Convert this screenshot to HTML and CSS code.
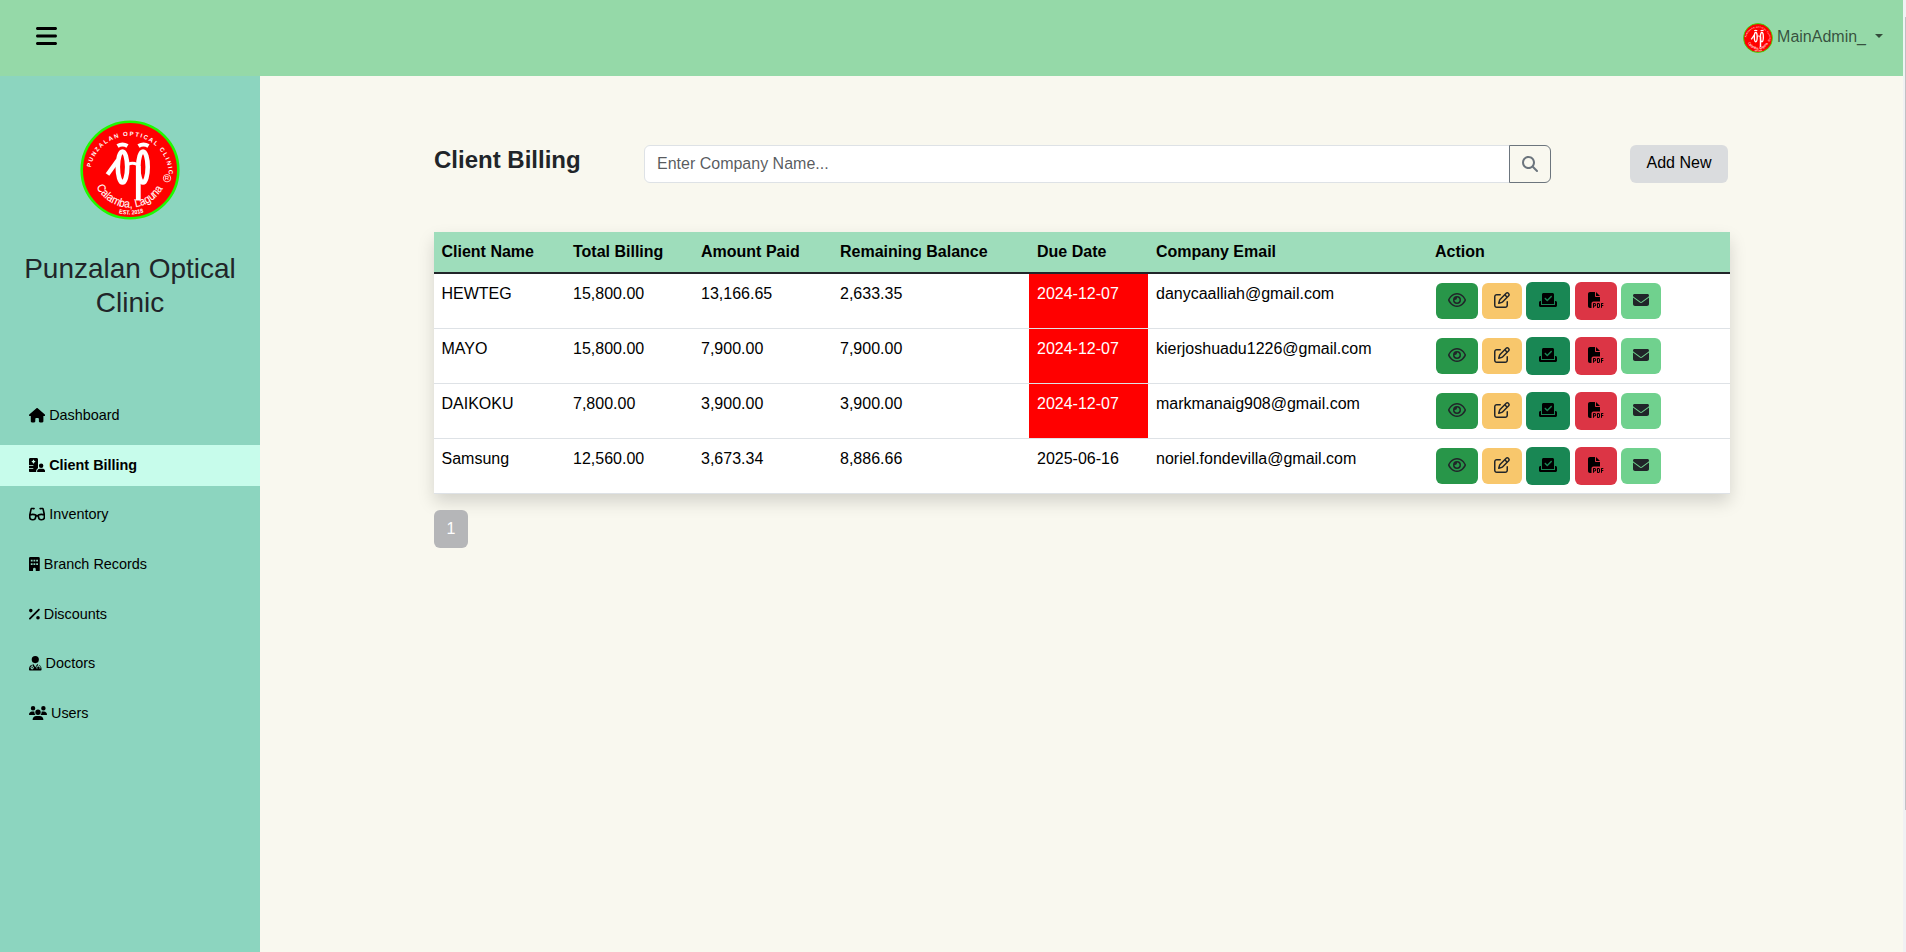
FILE: index.html
```html
<!DOCTYPE html>
<html lang="en">
<head>
<meta charset="utf-8">
<title>Client Billing</title>
<link rel="stylesheet" href="styles.css">
</head>
<body>
<svg class="defs" aria-hidden="true">
  <symbol id="eye" viewBox="0 0 576 512"><path d="M288 80c-65.200 0-118.800 29.600-159.900 67.700C89.600 183.500 63 226 49.400 256c13.600 30 40.200 72.500 78.600 108.300C169.200 402.400 222.800 432 288 432s118.800-29.600 159.900-67.700C486.400 328.500 513 286 526.600 256c-13.600-30-40.200-72.500-78.600-108.300C406.800 109.600 353.200 80 288 80zM95.400 112.600C142.500 68.800 207.200 32 288 32s145.500 36.800 192.600 80.600c46.800 43.500 78.100 95.400 93 131.100c3.300 7.900 3.300 16.700 0 24.600c-14.900 35.700-46.200 87.700-93 131.100C433.500 443.200 368.800 480 288 480s-145.500-36.800-192.600-80.600C48.600 356 17.300 304 2.500 268.300c-3.300-7.900-3.300-16.700 0-24.600C17.300 208 48.600 156 95.400 112.600zM288 336c44.200 0 80-35.800 80-80s-35.800-80-80-80c-.7 0-1.300 0-2 0c1.300 5.100 2 10.500 2 16c0 35.300-28.700 64-64 64c-5.500 0-10.900-.7-16-2c0 .7 0 1.300 0 2c0 44.200 35.800 80 80 80zm0-208a128 128 0 1 1 0 256 128 128 0 1 1 0-256z"/></symbol>
  <symbol id="edit" viewBox="0 0 512 512"><path d="M441 58.900L453.100 71c9.400 9.400 9.400 24.600 0 33.900L424 134.100 377.900 88 407 58.900c9.400-9.400 24.600-9.400 33.900 0zM209.800 256.200L344 121.900 390.100 168 255.800 302.200c-2.900 2.900-6.500 5-10.400 6.100l-58.500 16.700 16.700-58.500c1.100-3.900 3.200-7.500 6.100-10.400zM373.100 25L175.800 222.200c-8.700 8.700-15 19.400-18.300 31.100l-28.600 100c-2.400 8.400-.1 17.400 6.100 23.600s15.200 8.500 23.600 6.100l100-28.600c11.800-3.400 22.500-9.700 31.100-18.300L487 138.900c28.100-28.100 28.100-73.700 0-101.800L474.900 25C446.800-3.100 401.200-3.100 373.100 25zM88 64C39.400 64 0 103.400 0 152V424c0 48.600 39.400 88 88 88H360c48.600 0 88-39.400 88-88V312c0-13.300-10.700-24-24-24s-24 10.700-24 24V424c0 22.100-17.900 40-40 40H88c-22.100 0-40-17.900-40-40V152c0-22.100 17.900-40 40-40H200c13.300 0 24-10.700 24-24s-10.700-24-24-24H88z"/></symbol>
  <symbol id="slot" viewBox="0 0 576 512"><path d="M96 80c0-26.500 21.500-48 48-48H432c26.500 0 48 21.500 48 48V384H96V80zm313 47c-9.400-9.400-24.600-9.400-33.900 0l-111 111-47-47c-9.400-9.400-24.600-9.400-33.900 0s-9.400 24.600 0 33.900l64 64c9.400 9.400 24.600 9.400 33.900 0L409 161c9.400-9.400 9.400-24.600 0-33.900zM0 336c0-26.500 21.500-48 48-48H64V416H512V288h16c26.500 0 48 21.500 48 48v96c0 26.500-21.500 48-48 48H48c-26.500 0-48-21.500-48-48V336z"/></symbol>
  <symbol id="pdf" viewBox="0 0 512 512"><path d="M0 64C0 28.700 28.700 0 64 0H224V128c0 17.700 14.300 32 32 32H384V304H176c-35.300 0-64 28.700-64 64V512H64c-35.300 0-64-28.700-64-64V64zm384 64H256V0L384 128zM176 352h32c30.900 0 56 25.100 56 56s-25.100 56-56 56H192v32c0 8.800-7.200 16-16 16s-16-7.200-16-16V448 368c0-8.800 7.200-16 16-16zm32 80c13.300 0 24-10.700 24-24s-10.700-24-24-24H192v48h16zm96-80h32c26.500 0 48 21.500 48 48v64c0 26.500-21.500 48-48 48H304c-8.800 0-16-7.200-16-16V368c0-8.800 7.200-16 16-16zm32 128c8.800 0 16-7.200 16-16V400c0-8.800-7.200-16-16-16H320v96h16zm80-112c0-8.800 7.200-16 16-16h48c8.800 0 16 7.200 16 16s-7.200 16-16 16H448v32h32c8.800 0 16 7.200 16 16s-7.200 16-16 16H448v48c0 8.800-7.200 16-16 16s-16-7.200-16-16V432 368z"/></symbol>
  <symbol id="mail" viewBox="0 0 512 512"><path d="M48 64C21.500 64 0 85.500 0 112c0 15.100 7.100 29.300 19.200 38.400L236.800 313.600c11.400 8.500 27 8.500 38.400 0L492.800 150.400c12.100-9.100 19.200-23.300 19.200-38.400c0-26.500-21.500-48-48-48H48zM0 176V384c0 35.300 28.700 64 64 64H448c35.300 0 64-28.700 64-64V176L294.400 339.200c-22.800 17.100-54 17.100-76.800 0L0 176z"/></symbol>
</svg>
<header class="topbar">
  <button class="toggle" aria-label="Toggle menu"><svg viewBox="0 0 448 512"><path d="M0 96C0 78.300 14.300 64 32 64H416c17.700 0 32 14.300 32 32s-14.300 32-32 32H32C14.300 128 0 113.700 0 96zM0 256c0-17.700 14.300-32 32-32H416c17.700 0 32 14.300 32 32s-14.300 32-32 32H32c-17.700 0-32-14.300-32-32zM448 416c0 17.700-14.300 32-32 32H32c-17.700 0-32-14.300-32-32s14.300-32 32-32H416c17.700 0 32 14.300 32 32z"/></svg></button>
  <div class="account"><svg class="avatar" viewBox="0 0 100 100"><use href="#logo"/></svg><span>MainAdmin_</span><i class="caret"></i></div>
</header>
<div class="layout">
  <aside class="sidebar">
    <svg class="brand-logo" viewBox="0 0 100 100">
      <g id="logo">
        <circle cx="50" cy="50" r="48.300" fill="#f00" stroke="#20f800" stroke-width="2.600"/>
        <path id="arc-top" d="M10.700 47.500A39.500 39.500 0 0 1 88.900 55" fill="none"/>
        <path id="arc-low" d="M16.500 67A37.500 37.500 0 0 0 83.500 67" fill="none"/>
        <path id="arc-est" d="M36 92.300A44 44 0 0 0 66 91.500" fill="none"/>
        <g fill="#fff" font-family="Liberation Sans, Arial, sans-serif">
          <text font-size="6" font-weight="700"><textPath href="#arc-top" textLength="115">PUNZALAN OPTICAL CLINIC</textPath></text>
          <text font-size="11.500" stroke="#fff" stroke-width=".1"><textPath href="#arc-low" textLength="81" lengthAdjust="spacingAndGlyphs">Calamba, Laguna</textPath></text>
          <text font-size="6" font-weight="700"><textPath href="#arc-est" startOffset="3" textLength="25" lengthAdjust="spacingAndGlyphs">EST. 2018</textPath></text>
          <text x="87" y="60.300" font-size="6" text-anchor="middle">R</text>
        </g>
        <circle cx="87" cy="58.200" r="3.700" fill="none" stroke="#fff" stroke-width=".8"/>
        <g fill="none" stroke="#fff">
          <ellipse cx="42.500" cy="47" rx="4.700" ry="15.500" stroke-width="4.600"/>
          <ellipse cx="63" cy="47" rx="4.700" ry="15.500" stroke-width="4.600"/>
          <path d="M38 40L27.500 54.500" stroke-width="4.400"/>
          <path d="M48 44.500Q52.500 42 57 44.500" stroke-width="3"/>
          <path d="M58.300 46V80.500" stroke-width="4.800"/>
          <path d="M37.500 26Q42.500 23 47.500 26M58.500 26Q63.500 23 68.500 26" stroke-width="4"/>
        </g>
      </g>
    </svg>
    <h3 class="brand">Punzalan Optical Clinic</h3>
    <nav class="nav">
      <a class="nav-item"><svg viewBox="0 0 576 512"><path d="M575.800 255.500c0 18-15 32.100-32 32.100h-32l.7 160.200c0 2.700-.2 5.400-.5 8.100V472c0 22.100-17.900 40-40 40H392c-22.100 0-40-17.900-40-40V384c0-17.700-14.300-32-32-32H256c-17.700 0-32 14.300-32 32v88c0 22.100-17.900 40-40 40H104c-22.100 0-40-17.900-40-40V287.600H32c-18 0-32-14-32-32.100c0-9 3-17 10-24L266.400 8c7-7 15-8 22-8s15 2 21 7L564.800 231.500c8 7 12 15 11 24z"/></svg>Dashboard</a>
      <a class="nav-item active"><svg viewBox="0 0 576 512"><path d="M48 0C21.500 0 0 21.500 0 48V256H144c8.800 0 16 7.200 16 16s-7.200 16-16 16H0v64H144c8.800 0 16 7.200 16 16s-7.200 16-16 16H0v80c0 26.500 21.500 48 48 48H265.900c-6.300-10.200-9.900-22.200-9.900-35.100c0-46.900 25.800-87.800 64-109.200V48c0-26.500-21.500-48-48-48H48zM152 64h16c8.800 0 16 7.200 16 16v24h24c8.800 0 16 7.200 16 16v16c0 8.800-7.200 16-16 16H184v24c0 8.800-7.200 16-16 16H152c-8.800 0-16-7.200-16-16V152H112c-8.800 0-16-7.200-16-16V120c0-8.800 7.200-16 16-16h24V80c0-8.800 7.200-16 16-16zM512 272a80 80 0 1 0-160 0 80 80 0 1 0 160 0zM288 477.100c0 19.300 15.600 34.900 34.900 34.900H541.100c19.300 0 34.900-15.600 34.900-34.900c0-51.400-41.700-93.100-93.100-93.100H381.100c-51.400 0-93.100 41.700-93.100 93.100z"/></svg>Client Billing</a>
      <a class="nav-item"><svg viewBox="0 0 576 512"><path d="M180 56L146 56Q80 40 70 92L28 282V366Q28 452 124 452H146Q226 452 236 372L243 282Q136 242 28 282M396 56L430 56Q496 40 506 92L548 282V366Q548 452 452 452H430Q350 452 340 372L333 282Q440 242 548 282M243 318H333" fill="none" stroke="#000" stroke-width="58" stroke-linecap="round" stroke-linejoin="round"/></svg>Inventory</a>
      <a class="nav-item"><svg viewBox="0 0 384 512"><path fill-rule="evenodd" d="M48 0H336a48 48 0 0 1 48 48V464a48 48 0 0 1-48 48H240V432a48 48 0 0 0-96 0V512H48A48 48 0 0 1 0 464V48A48 48 0 0 1 48 0zM64 96v64h64V96zM160 96v64h64V96zM256 96v64h64V96zM64 224v64h64V224zM160 224v64h64V224zM256 224v64h64V224z"/></svg>Branch Records</a>
      <a class="nav-item"><svg viewBox="0 0 384 512"><path d="M374.600 118.600c12.500-12.500 12.500-32.800 0-45.300s-32.800-12.500-45.300 0l-320 320c-12.500 12.500-12.500 32.800 0 45.300s32.800 12.500 45.300 0l320-320zM128 128A64 64 0 1 0 0 128a64 64 0 1 0 128 0zM384 384a64 64 0 1 0-128 0 64 64 0 1 0 128 0z"/></svg>Discounts</a>
      <a class="nav-item"><svg viewBox="0 0 448 512"><path fill-rule="evenodd" d="M224 0a128 128 0 1 1 0 256 128 128 0 1 1 0-256zM96 308V362A56 56 0 1 0 128 362V297Q144 296 160 296L224 400 288 296Q304 296 320 297V338Q262 350 264 400V448H304V416H288Q288 370 336 370T384 416H368V448H408V400Q410 350 352 338V308Q448 340 448 480Q448 512 416 512H32Q0 512 0 480Q0 340 96 308zM112 388A24 24 0 1 1 112 436 24 24 0 1 1 112 388z"/></svg>Doctors</a>
      <a class="nav-item"><svg viewBox="0 0 640 512"><path d="M144 0a80 80 0 1 1 0 160A80 80 0 1 1 144 0zM512 0a80 80 0 1 1 0 160A80 80 0 1 1 512 0zM0 298.700C0 239.800 47.800 192 106.700 192h42.700c15.900 0 31 3.500 44.600 9.700c-1.300 7.200-1.900 14.700-1.900 22.300c0 38.200 16.800 72.500 43.300 96H21.300C9.600 320 0 310.400 0 298.700zM405.300 320h-.7c26.600-23.500 43.300-57.800 43.300-96c0-7.600-.7-15-1.900-22.300c13.600-6.300 28.700-9.700 44.600-9.700h42.700C592.200 192 640 239.800 640 298.700c0 11.800-9.600 21.300-21.300 21.300H405.300zM224 224a96 96 0 1 1 192 0 96 96 0 1 1-192 0zM128 485.300C128 411.700 187.700 352 261.300 352H378.700C452.300 352 512 411.700 512 485.300c0 14.700-11.900 26.700-26.700 26.700H154.700c-14.700 0-26.700-11.900-26.700-26.700z"/></svg>Users</a>
    </nav>
  </aside>
  <main class="content">
    <div class="toolbar">
      <h1 class="title">Client Billing</h1>
      <form class="search">
        <input class="search-input" type="text" placeholder="Enter Company Name...">
        <button class="search-btn" type="button" aria-label="Search"><svg viewBox="0 0 512 512"><path d="M416 208c0 45.900-14.900 88.300-40 122.700L502.600 457.400c12.500 12.500 12.500 32.800 0 45.300s-32.800 12.500-45.300 0L330.700 376c-34.400 25.200-76.800 40-122.700 40C93.100 416 0 322.900 0 208S93.100 0 208 0S416 93.100 416 208zM208 352a144 144 0 1 0 0-288 144 144 0 1 0 0 288z"/></svg></button>
      </form>
      <button class="add-btn">Add New</button>
    </div>
    <table class="table">
      <colgroup><col class="c1"><col class="c2"><col class="c3"><col class="c4"><col class="c5"><col class="c6"><col></colgroup>
      <thead><tr><th>Client Name</th><th>Total Billing</th><th>Amount Paid</th><th>Remaining Balance</th><th>Due Date</th><th>Company Email</th><th>Action</th></tr></thead>
      <tbody>
        <tr><td>HEWTEG</td><td>15,800.00</td><td>13,166.65</td><td>2,633.35</td><td class="late">2024-12-07</td><td>danycaalliah@gmail.com</td><td><div class="actions"><a class="b view"><svg class="wide"><use href="#eye"/></svg></a><a class="b edit"><svg><use href="#edit"/></svg></a><a class="b slot"><svg class="wide"><use href="#slot"/></svg></a><a class="b pdf"><svg><use href="#pdf"/></svg></a><a class="b mail"><svg><use href="#mail"/></svg></a></div></td></tr>
        <tr><td>MAYO</td><td>15,800.00</td><td>7,900.00</td><td>7,900.00</td><td class="late">2024-12-07</td><td>kierjoshuadu1226@gmail.com</td><td><div class="actions"><a class="b view"><svg class="wide"><use href="#eye"/></svg></a><a class="b edit"><svg><use href="#edit"/></svg></a><a class="b slot"><svg class="wide"><use href="#slot"/></svg></a><a class="b pdf"><svg><use href="#pdf"/></svg></a><a class="b mail"><svg><use href="#mail"/></svg></a></div></td></tr>
        <tr><td>DAIKOKU</td><td>7,800.00</td><td>3,900.00</td><td>3,900.00</td><td class="late">2024-12-07</td><td>markmanaig908@gmail.com</td><td><div class="actions"><a class="b view"><svg class="wide"><use href="#eye"/></svg></a><a class="b edit"><svg><use href="#edit"/></svg></a><a class="b slot"><svg class="wide"><use href="#slot"/></svg></a><a class="b pdf"><svg><use href="#pdf"/></svg></a><a class="b mail"><svg><use href="#mail"/></svg></a></div></td></tr>
        <tr><td>Samsung</td><td>12,560.00</td><td>3,673.34</td><td>8,886.66</td><td>2025-06-16</td><td>noriel.fondevilla@gmail.com</td><td><div class="actions"><a class="b view"><svg class="wide"><use href="#eye"/></svg></a><a class="b edit"><svg><use href="#edit"/></svg></a><a class="b slot"><svg class="wide"><use href="#slot"/></svg></a><a class="b pdf"><svg><use href="#pdf"/></svg></a><a class="b mail"><svg><use href="#mail"/></svg></a></div></td></tr>
      </tbody>
    </table>
    <a class="page-link">1</a>
  </main>
</div>
<div class="scrollbar"><div class="thumb"></div></div>
</body>
</html>
```

FILE: styles.css
```css
* { box-sizing: border-box; }
body {
  margin: 0;
  height: 952px;
  overflow: hidden;
  display: flex;
  flex-direction: column;
  background: #f9f8ef;
  color: #212529;
  font: 16px/24px "Liberation Sans", Arial, sans-serif;
}
button { font: inherit; }
.defs { position: absolute; width: 0; height: 0; }

.topbar {
  flex: none;
  height: 76px;
  margin-right: 3px;
  padding: 0 20px 0 36px;
  display: flex;
  justify-content: space-between;
  background: #95d9a8;
}
.toggle { padding: 0; margin-top: 24px; height: 24px; border: 0; background: none; }
.toggle svg { display: block; width: 21px; height: 24px; }
.account { display: flex; align-items: flex-start; color: rgba(0, 0, 0, .65); }
.avatar { width: 30px; height: 30px; margin: 23px 4px 0 0; overflow: visible; }
.account span { margin-top: 25px; }
.caret { margin: 34px 0 0 9px; border: 4px solid transparent; border-top-color: currentColor; border-bottom: 0; }

.layout { flex: 1; display: flex; }
.sidebar {
  width: 260px;
  flex: none;
  display: flex;
  flex-direction: column;
  align-items: center;
  background: #8cd5bf;
}
.brand-logo { width: 100px; height: 100px; margin-top: 44px; overflow: visible; }
.brand { margin: 32px 0 0; width: 220px; font-size: 28px; line-height: 33.6px; font-weight: 500; text-align: center; }
.nav { align-self: stretch; margin-top: 76px; display: flex; flex-direction: column; gap: 8px; }
.nav-item {
  display: flex;
  align-items: center;
  gap: 4px;
  height: 41.6px;
  padding: 0 0 0 29px;
  font-size: 14.4px;
  line-height: 21.6px;
  color: #000;
}
.nav-item svg { height: 14.4px; flex: none; margin-bottom: 1px; }
.nav-item.active { background: #c7fceb; font-weight: 700; }

.content { width: 1296px; margin-left: 174px; padding-top: 69px; }
.toolbar { display: flex; align-items: flex-start; height: 87px; }
.title { width: 210px; margin: 0; font-size: 24px; line-height: 29px; font-weight: 700; }
.search { display: flex; width: 907px; }
.search-input {
  flex: 1;
  height: 38px;
  padding: 0 12px;
  font: inherit;
  background: #fff;
  border: 1px solid #dee2e6;
  border-radius: 6px 0 0 6px;
}
.search-input::placeholder { color: rgba(33, 37, 41, .75); }
.search-btn {
  width: 42px;
  height: 38px;
  padding: 0 0 1px;
  margin-left: -1px;
  display: flex;
  align-items: center;
  justify-content: center;
  background: none;
  border: 1px solid #6c757d;
  border-radius: 0 6px 6px 0;
}
.search-btn svg { width: 16px; height: 16px; fill: #6c757d; }
.add-btn { width: 98px; height: 38px; margin-left: 79px; padding: 0 0 2px; border: 0; border-radius: 6px; background: #dadcde; color: #000; }

.table {
  width: 1296px;
  table-layout: fixed;
  border-collapse: separate;
  border-spacing: 0;
  background: #fff;
  color: #000;
  box-shadow: 0 8px 16px rgba(0, 0, 0, .15);
}
.c1 { width: 131px; }
.c2 { width: 128px; }
.c3 { width: 139px; }
.c4 { width: 197px; }
.c5 { width: 119px; }
.c6 { width: 279px; }
.table th { height: 42px; padding: 7px 8px; text-align: left; background: #9eddbb; border-bottom: 2px solid #212529; }
.table td { height: 55px; padding: 8px 8px 0; vertical-align: top; border-bottom: 1px solid #dee2e6; }
.table tr > :first-child { padding-left: 7.5px; }
.table td.late { background: #f00; color: #fff; }
.actions { display: flex; align-items: center; height: 38px; margin-left: 1px; }
.b { display: flex; align-items: center; justify-content: center; width: 40px; height: 36px; padding-bottom: 2px; border-radius: 6px; fill: #212529; }
.b svg { width: 16px; height: 16px; }
.b svg.wide { width: 18px; }
.view { width: 42px; margin-right: 4px; background: #289649; }
.edit { margin-right: 4px; background: #f8c76c; }
.slot { width: 44px; height: 38px; margin-right: 5px; background: #198754; fill: #000; }
.pdf { width: 42px; height: 38px; margin-right: 4px; background: #dc3545; fill: #000; }
.mail { background: #70d18e; }

.page-link {
  display: flex;
  align-items: center;
  justify-content: center;
  width: 34px;
  height: 38px;
  margin-top: 16px;
  border-radius: 6px;
  background: #b5b6b8;
  color: #fff;
}

.scrollbar { position: absolute; top: 0; right: 0; width: 3px; height: 952px; background: #f1f1f3; }
.thumb { width: 1px; height: 793px; margin: 17px 0 0 2px; background: #c1c1c4; }
```
